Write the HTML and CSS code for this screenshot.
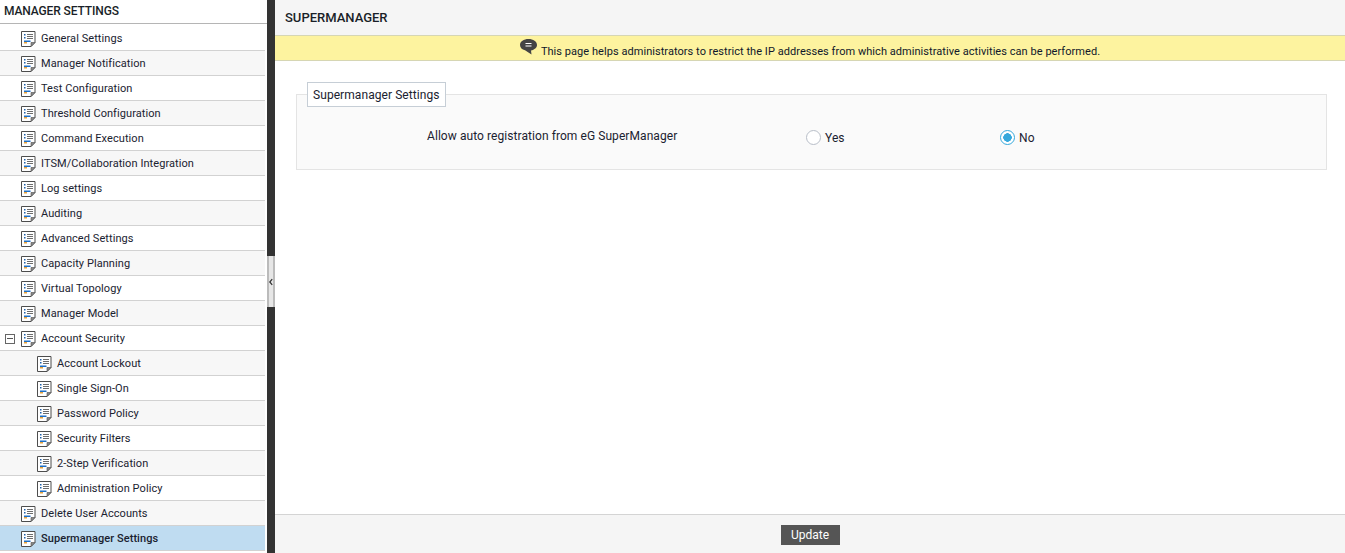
FILE: index.html
```html
<!DOCTYPE html>
<html lang="en">
<head>
<meta charset="utf-8">
<title>Supermanager Settings</title>
<link rel="stylesheet" href="styles.css">
</head>
<body>
<svg class="defs" width="0" height="0" aria-hidden="true">
  <symbol id="doc" viewBox="0 0 15 16">
    <path d="M.5.5h13.500v11l-4 4H.5z" fill="#fff" stroke="#4d4d4d"/>
    <path d="M10 15.500v-4h4z" fill="#8a8a8a" stroke="#4d4d4d" stroke-width=".6"/>
    <path d="M3 3h1.500v1.500H3zM3 6h1.500v1.500H3z" fill="#1c5fa8"/>
    <path d="M6 3.500h6M6 5.500h6M6 7.500h6" stroke="#6d6d6d" fill="none"/>
    <path d="M3 9.500h6.500v1.500H3z" fill="#1c6fc8"/>
    <path d="M3 11h3v1.500H3z" fill="#e8a33c"/>
  </symbol>
</svg>
<div class="app">
  <aside class="sidebar">
    <h2 class="side-title">MANAGER SETTINGS</h2>
    <ul class="tree">
      <li class="row"><svg class="doc"><use href="#doc"/></svg>General Settings</li>
      <li class="row"><svg class="doc"><use href="#doc"/></svg>Manager Notification</li>
      <li class="row"><svg class="doc"><use href="#doc"/></svg>Test Configuration</li>
      <li class="row"><svg class="doc"><use href="#doc"/></svg>Threshold Configuration</li>
      <li class="row"><svg class="doc"><use href="#doc"/></svg>Command Execution</li>
      <li class="row"><svg class="doc"><use href="#doc"/></svg>ITSM/Collaboration Integration</li>
      <li class="row"><svg class="doc"><use href="#doc"/></svg>Log settings</li>
      <li class="row"><svg class="doc"><use href="#doc"/></svg>Auditing</li>
      <li class="row"><svg class="doc"><use href="#doc"/></svg>Advanced Settings</li>
      <li class="row"><svg class="doc"><use href="#doc"/></svg>Capacity Planning</li>
      <li class="row"><svg class="doc"><use href="#doc"/></svg>Virtual Topology</li>
      <li class="row"><svg class="doc"><use href="#doc"/></svg>Manager Model</li>
      <li class="row row-parent"><span class="minus"></span><svg class="doc"><use href="#doc"/></svg>Account Security</li>
      <li class="row row-child"><svg class="doc"><use href="#doc"/></svg>Account Lockout</li>
      <li class="row row-child"><svg class="doc"><use href="#doc"/></svg>Single Sign-On</li>
      <li class="row row-child"><svg class="doc"><use href="#doc"/></svg>Password Policy</li>
      <li class="row row-child"><svg class="doc"><use href="#doc"/></svg>Security Filters</li>
      <li class="row row-child"><svg class="doc"><use href="#doc"/></svg>2-Step Verification</li>
      <li class="row row-child"><svg class="doc"><use href="#doc"/></svg>Administration Policy</li>
      <li class="row"><svg class="doc"><use href="#doc"/></svg>Delete User Accounts</li>
      <li class="row row-active"><svg class="doc"><use href="#doc"/></svg>Supermanager Settings</li>
    </ul>
  </aside>
  <div class="splitter">
    <div class="handle"><svg class="chev" viewBox="0 0 5 8"><path d="M4 .5 1 4l3 3.500" fill="none" stroke="#333" stroke-width="1.600"/></svg></div>
  </div>
  <main class="main">
    <header class="top">SUPERMANAGER</header>
    <div class="notice">
      <svg class="bubble" viewBox="0 0 17 16"><path d="M8.500 0C3.800 0 0 2.400 0 6c0 2.700 2.100 4.600 5 5.300L11.500 15.500 11 11.500C14.500 10.700 17 8.700 17 6c0-3.600-3.800-6-8.500-6z" fill="#444"/><path d="M5.500 4.500h6M5.500 7h6" stroke="#fff" stroke-width="1.200"/></svg>
      <span>This page helps administrators to restrict the IP addresses from which administrative activities can be performed.</span>
    </div>
    <div class="content">
      <fieldset class="panel">
        <legend class="legend">Supermanager Settings</legend>
        <div class="field">
          <span class="field-label">Allow auto registration from eG SuperManager</span>
          <span class="radio radio-yes"><span class="dot"></span>Yes</span>
          <span class="radio radio-no"><span class="dot dot-on"></span>No</span>
        </div>
      </fieldset>
    </div>
    <footer class="foot"><button class="update" type="button">Update</button></footer>
  </main>
</div>
</body>
</html>
```
FILE: styles.css
```css
* { box-sizing: border-box; }
html, body { margin: 0; height: 100%; overflow: hidden; }
body { font-family: Roboto, "Liberation Sans", sans-serif; font-size: 11px; color: #1a2230; background: #fff; }
.defs { position: absolute; }
.app { display: flex; height: 553px; }

.sidebar { width: 267px; flex: none; overflow: hidden; }
.side-title { margin: 0; height: 24px; padding: 4px 0 0 4px; font-size: 12px; line-height: 15px; font-weight: 500; letter-spacing: -.12px; color: #1a1f28; border-bottom: 1px solid #b5b5b5; }
.tree { list-style: none; margin: 0; padding: 2px 0 0; width: 265px; letter-spacing: .07px; }
.row { height: 25px; display: flex; align-items: center; padding: 1px 0 0 21px; border-bottom: 1px solid #d2d2d2; background: #fff; }
.row:nth-child(even) { background: #f7f7f7; }
.doc { width: 15px; height: 16px; margin-right: 5px; flex: none; }
.row-parent { padding-left: 5px; }
.row-child { padding-left: 37px; }
.row-active, .row-active:nth-child(even) { background: #bfdcf1; font-weight: 500; }
.minus { width: 10px; height: 10px; margin-right: 6px; border: 1px solid #666; background: linear-gradient(#555, #555) center / 6px 1px no-repeat; flex: none; }

.splitter { width: 8px; flex: none; background: #333; padding-top: 256px; }
.handle { height: 51px; background: #e6e6e6; border: 1px solid #bbb; border-width: 0 2px; display: flex; align-items: center; justify-content: center; }
.chev { width: 5px; height: 8px; }

.main { flex: 1; display: flex; flex-direction: column; min-width: 0; }
.top { height: 35px; padding: 10px 0 0 10px; background: #f5f5f5; font-size: 13px; line-height: 15px; font-weight: 500; color: #1a1f28; }
.notice { height: 26px; display: flex; justify-content: center; align-items: flex-end; padding-bottom: 1px; gap: 4px; background: #fdf39f; border: 1px solid #d6d6b4; border-width: 1px 0; line-height: 14px; letter-spacing: .05px; color: #10182a; }
.bubble { width: 17px; height: 16px; margin-bottom: 4px; }
.content { flex: 1; padding: 21px 18px 0 21px; }
.panel { margin: 0; padding: 0; height: 88px; border: 1px solid #e4e4e4; background: #fafafa; min-width: 0; }
.legend { margin-left: 10px; padding: 0 5px; height: 25px; line-height: 25px; font-size: 12px; letter-spacing: .07px; background: #fff; border: 1px solid #c6ced6; }
.field { display: flex; align-items: center; height: 61px; font-size: 12px; letter-spacing: .07px; }
.field-label { width: 509px; padding-left: 130px; margin-top: -4px; flex: none; }
.radio { display: flex; align-items: center; gap: 4px; }
.radio-yes { width: 194px; }
.dot { width: 15px; height: 15px; border-radius: 50%; border: 1px solid #b8bec8; background: #fff; }
.dot-on { border-color: #35a8dc; background: radial-gradient(circle, #35a8dc 0 4px, #fff 4.500px); }

.foot { height: 39px; display: flex; justify-content: center; align-items: flex-start; padding: 10px 0 0; background: #f5f5f5; border-top: 1px solid #d4d4d4; }
.update { width: 59px; height: 20px; border: 0; padding: 0; background: #555; color: #fff; font: 12px Roboto, sans-serif; }
```
